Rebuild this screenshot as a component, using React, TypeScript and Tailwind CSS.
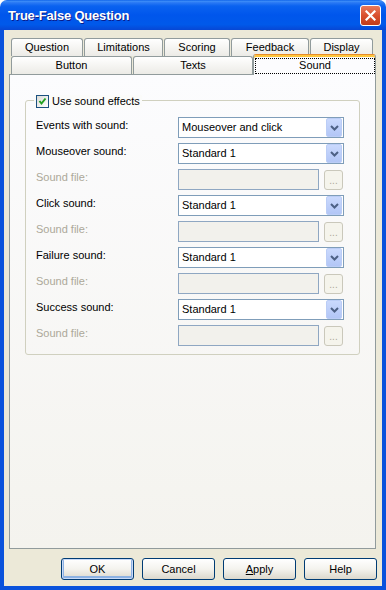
import React from 'react';

const CloseIcon = () => (
  <svg width="11" height="11" viewBox="0 0 11 11">
    <path d="M1.5 1.5 L9.5 9.5 M9.5 1.5 L1.5 9.5" stroke="#fff" strokeWidth="2.2" strokeLinecap="square" />
  </svg>
);

const Chevron = () => (
  <svg width="9" height="6" viewBox="0 0 9 6">
    <path d="M1 1 L4.5 4.5 L8 1" fill="none" stroke="#4D6185" strokeWidth="2" />
  </svg>
);

const Tab = ({ label, w }: { label: string; w: string }) => (
  <div
    className={`${w} h-full flex items-center justify-center rounded-t-[3px] border border-b-0 border-[#919B9C] bg-linear-to-b from-white to-[#ECEBE6]`}
  >
    {label}
  </div>
);

const Combo = ({ value }: { value: string }) => (
  <div className="flex h-[21px] w-[166px] items-center border border-[#7F9DB9] bg-white">
    <span className="flex-1 pl-[3px]">{value}</span>
    <div className="mr-px flex h-[19px] w-[16px] items-center justify-center rounded-[2px] border border-[#BBCDF6] bg-linear-to-b from-[#CAD9FD] to-[#B2C6F6]">
      <Chevron />
    </div>
  </div>
);

const FileInput = () => (
  <div className="flex h-[21px] w-[166px] items-center gap-[5px]">
    <div className="h-[21px] w-[141px] border border-[#8FA7C2] bg-[#F2F1EC]" />
    <div className="flex h-[20px] w-[19px] items-end justify-center rounded-[3px] border border-[#CAC8BB] bg-[#F5F4EC] pb-[3px] text-[10px] leading-[10px] text-[#ACA899]">
      ...
    </div>
  </div>
);

const Row = ({ label, disabled, children }: { label: string; disabled?: boolean; children: React.ReactNode }) => (
  <div className="flex h-[21px] items-start">
    <span className={`w-[142px] pt-[2px] ${disabled ? 'text-[#ACA899]' : 'text-black'}`}>{label}</span>
    {children}
  </div>
);

const DlgButton = ({ children, primary }: { children: React.ReactNode; primary?: boolean }) => (
  <div
    className={`flex h-[22px] w-[73px] items-center justify-center rounded-[3px] border border-[#003C74] bg-linear-to-b from-white via-[#F4F3EE] to-[#DCD8CC] ${
      primary ? 'shadow-[inset_0_0_0_1px_#C9DAF7,inset_0_-1px_0_2px_#8DB2E3]' : ''
    }`}
  >
    {children}
  </div>
);

export default function App() {
  return (
    <div className="flex h-[590px] w-[386px] flex-col bg-white font-['Liberation_Sans',Arial,sans-serif] text-[11px] leading-[13px] text-black">
      <div className="flex h-[30px] items-center rounded-t-[7px] bg-[linear-gradient(to_bottom,#0A5FE8_0%,#3D8DF8_4%,#2A79F4_9%,#0A62F0_20%,#0056EC_50%,#0059EA_82%,#0747D4_100%)] pl-[8px] pr-[5px]">
        <span className="text-[13px] font-bold tracking-[-0.2px] text-white [text-shadow:1px_1px_0_#0A1C8A]">True-False Question</span>
        <div className="ml-auto flex h-[21px] w-[21px] items-center justify-center rounded-[3px] border border-white bg-linear-to-b from-[#E8795B] via-[#D9502E] to-[#C23C1A]">
          <CloseIcon />
        </div>
      </div>

      <div className="flex flex-1 flex-col border-x-4 border-b-4 border-[#0A52DC] bg-[#ECE9D8]">
        <div className="flex flex-col pt-[8px]">
          <div className="flex h-[18px] gap-px pl-[7px]">
            <Tab label="Question" w="w-[72px]" />
            <Tab label="Limitations" w="w-[79px]" />
            <Tab label="Scoring" w="w-[66px]" />
            <Tab label="Feedback" w="w-[78px]" />
            <Tab label="Display" w="w-[63px]" />
          </div>
          <div className="flex h-[18px] items-end pl-[7px]">
            <Tab label="Button" w="w-[121px]" />
            <div className="ml-px h-full">
              <Tab label="Texts" w="w-[120px]" />
            </div>
            <div className="relative z-10 -mb-px h-[21px] w-[123px] rounded-t-[3px] border border-b-0 border-[#919B9C] border-t-[#E68B2C] bg-[#FCFCFE] pl-px pt-[3px] shadow-[inset_0_2px_0_#FFC73C]">
              <div className="flex h-[16px] items-center justify-center border border-dotted border-black pb-[2px]">Sound</div>
            </div>
          </div>
        </div>

        <div className="ml-[5px] h-[475px] w-[367px] border border-[#919B9C] bg-linear-to-b from-[#FCFCFE] to-[#F4F3EE] px-[15px] pt-[25px]">
          <div className="relative rounded-[3px] border border-[#D0D0BF] pb-[8px] pl-[10px] pr-[15px] pt-[16px]">
            <div className="absolute -top-[6px] left-[8px] flex items-center gap-[3px] bg-[#FBFBFA] px-[2px]">
              <div className="h-[13px] w-[13px] border border-[#1C5180] bg-linear-to-br from-[#DCDCD7] to-white">
                <svg width="11" height="11" viewBox="0 0 11 11">
                  <path d="M2.5 5 L4.5 7.5 L8.5 2.5" fill="none" stroke="#21A121" strokeWidth="2" />
                </svg>
              </div>
              <span className="-mt-px">Use sound effects</span>
            </div>
            <div className="flex flex-col gap-[5px]">
              <Row label="Events with sound:">
                <Combo value="Mouseover and click" />
              </Row>
              <Row label="Mouseover sound:">
                <Combo value="Standard 1" />
              </Row>
              <Row label="Sound file:" disabled>
                <FileInput />
              </Row>
              <Row label="Click sound:">
                <Combo value="Standard 1" />
              </Row>
              <Row label="Sound file:" disabled>
                <FileInput />
              </Row>
              <Row label="Failure sound:">
                <Combo value="Standard 1" />
              </Row>
              <Row label="Sound file:" disabled>
                <FileInput />
              </Row>
              <Row label="Success sound:">
                <Combo value="Standard 1" />
              </Row>
              <Row label="Sound file:" disabled>
                <FileInput />
              </Row>
            </div>
          </div>
        </div>

        <div className="flex justify-end gap-[8px] pr-[5px] pt-[9px]">
          <DlgButton primary>OK</DlgButton>
          <DlgButton>Cancel</DlgButton>
          <DlgButton>
            <span>
              <span className="underline">A</span>pply
            </span>
          </DlgButton>
          <DlgButton>Help</DlgButton>
        </div>
      </div>
    </div>
  );
}
